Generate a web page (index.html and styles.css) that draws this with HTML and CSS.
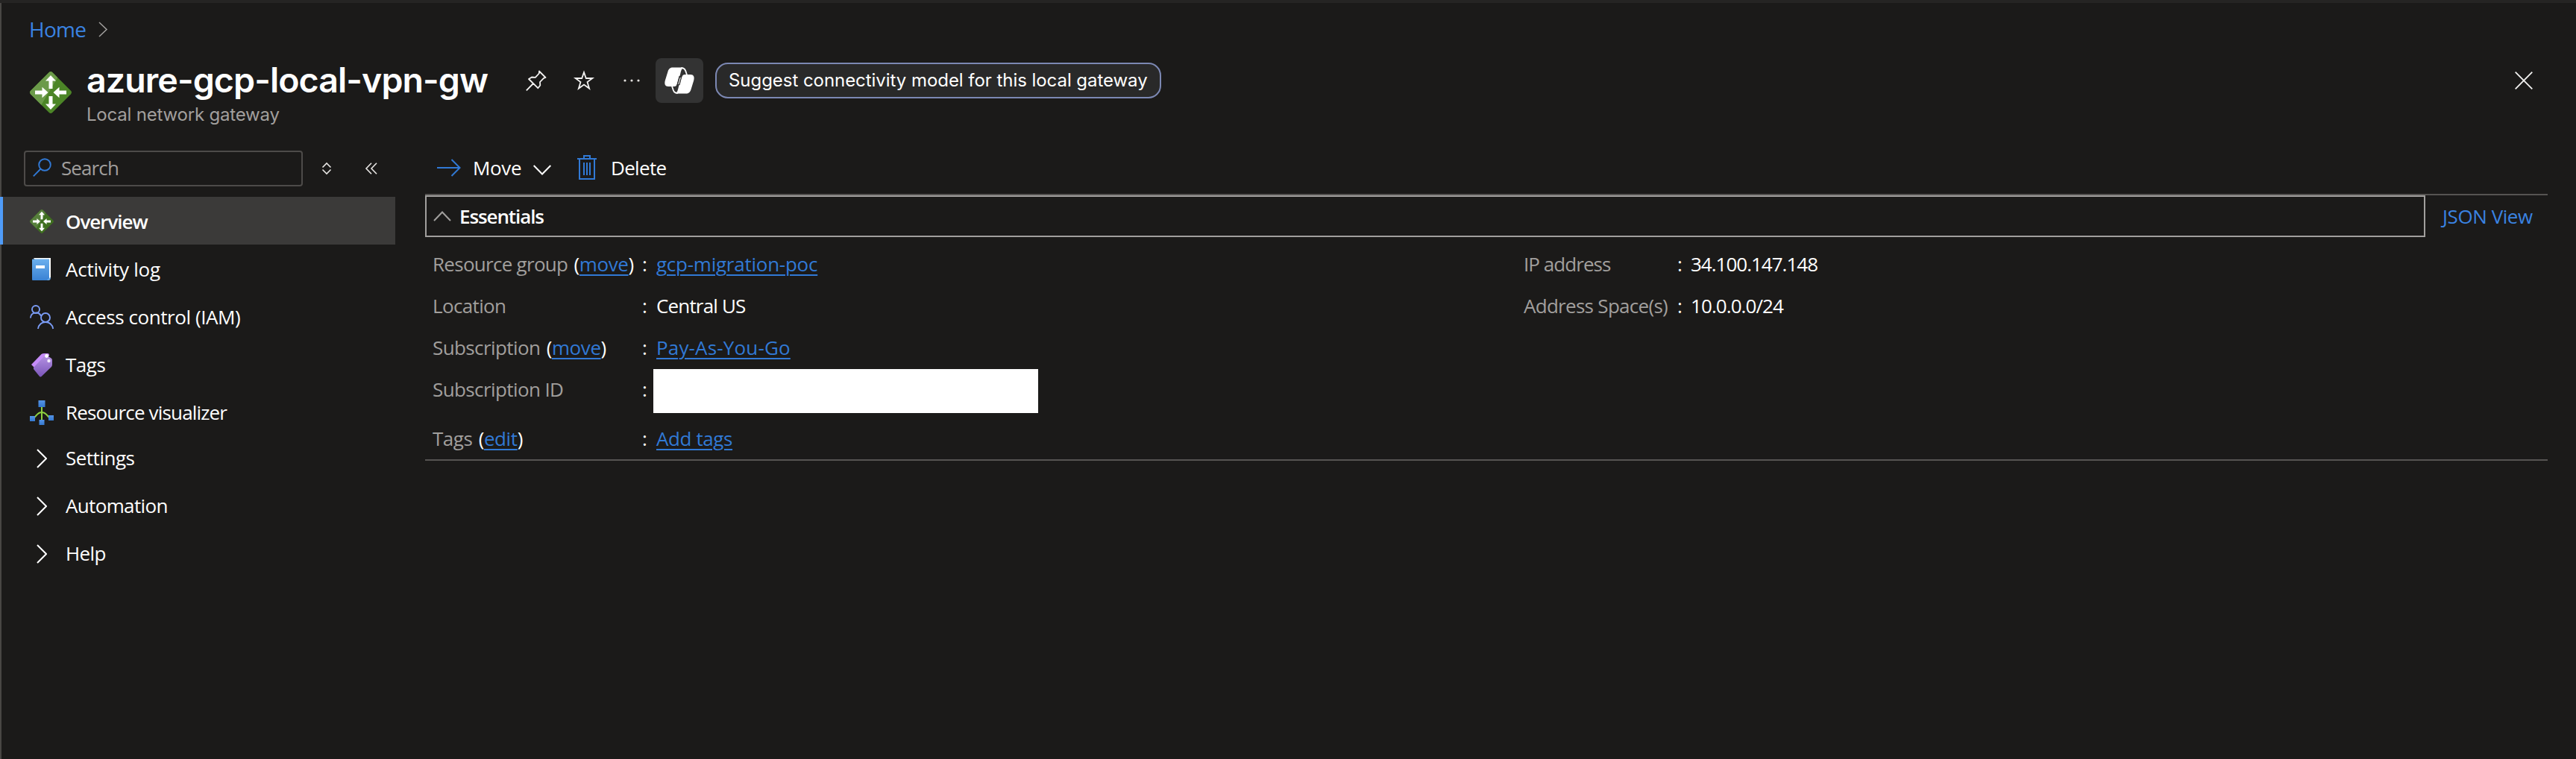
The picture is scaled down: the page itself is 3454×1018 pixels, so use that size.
FILE: index.html
```
<!DOCTYPE html>
<html lang="en">
<head>
<meta charset="utf-8">
<title>azure-gcp-local-vpn-gw</title>
<link rel="stylesheet" href="styles.css">
</head>
<body>
<svg width="0" height="0" class="defs" aria-hidden="true">
  <defs>
    <linearGradient id="book" x1="0" y1="0" x2="0" y2="1"><stop offset="0" stop-color="#6bb0ee"/><stop offset="1" stop-color="#3a82d4"/></linearGradient>
    <linearGradient id="tag" x1="0" y1="0" x2="0" y2="1"><stop offset="0" stop-color="#b794e4"/><stop offset="1" stop-color="#7a55b8"/></linearGradient>
    <linearGradient id="node" x1="0" y1="0" x2="0" y2="1"><stop offset="0" stop-color="#5594e6"/><stop offset="1" stop-color="#3478cf"/></linearGradient>
    <clipPath id="diamond"><path d="M25.8 1 Q28-1 30.2 1 L55 25.8 Q57 28 55 30.2 L30.2 55 Q28 57 25.8 55 L1 30.2 Q-1 28 1 25.8Z"/></clipPath>
    <symbol id="gateway" viewBox="0 0 56 56">
      <g clip-path="url(#diamond)">
        <rect width="56" height="56" fill="var(--gw-dark, #4c8527)"/>
        <path d="M0 0H42L14 47L0 56Z" fill="var(--gw-light, #6b9a49)"/>
      </g>
      <g fill="#fff">
        <path d="M28 5l7 7.500h-4.500V23h-5V12.500H21Z"/>
        <path d="M28 51l7-7.500h-4.500V33h-5v10.500H21Z"/>
        <path d="M24.500 28l-8-7.200v4.700H7v5h9.500v4.700Z"/>
        <path d="M31.500 28l8-7.200v4.700H49v5h-9.500v4.700Z"/>
      </g>
    </symbol>
    <symbol id="chev" viewBox="0 0 14 26"><path d="M1 1l12 12L1 25" fill="none" stroke="currentColor" stroke-width="2"/></symbol>
  </defs>
</svg>
<div class="blade">
  <header class="header">
    <nav class="crumbs"><a class="home">Home</a><svg width="12" height="21" viewBox="0 0 12 21"><path d="M1 1l10 9.500L1 20" fill="none" stroke="#a3a19f" stroke-width="1.500"/></svg></nav>
    <div class="titlebar">
      <svg class="logo" width="56" height="56"><use href="#gateway"/></svg>
      <div class="heading">
        <div class="title-row">
          <h1>azure-gcp-local-vpn-gw</h1>
          <svg class="pin" width="28" height="28" viewBox="0 0 28 28" fill="none" stroke="#f3f2f1" stroke-width="1.800" stroke-linejoin="round"><path d="M18 1.500L26.500 10l-2.500.8-5 5.200.3 4.500-3 3.700L4 12l4-2.500 4.800.3 5-5.300ZM10 18L.8 27.300"/></svg>
          <svg class="star" width="28" height="28" viewBox="0 0 28 28" fill="none" stroke="#f3f2f1" stroke-width="1.800"><path d="M14 3l2.800 8h8.600l-6.900 5.100 2.600 8.500L14 19.500l-7.100 5.100 2.600-8.500L2.600 11h8.600Z"/></svg>
          <svg class="dots" width="22" height="4" viewBox="0 0 22 4" fill="#e1dfdd"><circle cx="2" cy="2" r="1.600"/><circle cx="11" cy="2" r="1.600"/><circle cx="20" cy="2" r="1.600"/></svg>
          <span class="copilot">
            <svg width="40" height="36" viewBox="0 0 40 36">
              <path d="M11 .5H25C22.500 2.500 22 6 21 10L17 22C16 25 15 26 13 26H5C1 26-.5 23 .8 18L4.500 6C5.700 2 8 .5 11 .5Z" fill="#fff"/>
              <path d="M29 35.500H15C17.500 33.500 18 30 19 26L23 14C24 11 25 10 27 10H35C39 10 40.500 13 39.200 18L35.500 30C34.300 34 32 35.500 29 35.500Z" fill="#fff"/>
              <path d="M22 1.300C27.500.8 28 4 30 10.500M18 34.700C12.500 35.200 12 32 10 25.500" fill="none" stroke="#fff" stroke-width="1.800"/>
              <path d="M19.500 12h4L20.500 24h-4Z" fill="#333"/>
              <path d="M21.300 14L18.800 23" fill="none" stroke="#fff" stroke-width="1"/>
            </svg>
          </span>
          <button class="suggest">Suggest connectivity model for this local gateway</button>
          <svg class="close" width="24" height="24" viewBox="0 0 24 24"><path d="M.7.700l22.600 22.600M23.300.700L.7 23.300" stroke="#f3f2f1" stroke-width="1.800"/></svg>
        </div>
        <p class="subtitle">Local network gateway</p>
      </div>
    </div>
  </header>

  <div class="columns">
    <aside class="sidebar">
      <div class="tools">
        <div class="search">
          <svg width="26" height="26" viewBox="0 0 26 26" fill="none" stroke="#3179d5" stroke-width="1.900"><circle cx="16" cy="9" r="7.800"/><path d="M10.500 14.500L.8 24.300"/></svg>
          <span>Search</span>
        </div>
        <svg class="sort" width="12" height="16" viewBox="0 0 12 16" fill="none" stroke="#e8e6e4" stroke-width="1.600"><path d="M.5 6.500L6 1l5.500 5.500M.5 9.500L6 15l5.500-5.500"/></svg>
        <svg class="collapse" width="16" height="16" viewBox="0 0 16 16" fill="none" stroke="#e8e6e4" stroke-width="1.600"><path d="M8 .8L1 8l7 7.200M15 .8L8 8l7 7.200"/></svg>
      </div>
      <ul class="menu">
        <li class="item active"><svg class="gw-small" width="32" height="32"><use href="#gateway"/></svg><span class="m-overview">Overview</span></li>
        <li class="item"><svg width="32" height="32" viewBox="0 0 32 32"><path d="M5 1h23v26l-2 3Z" fill="#fff"/><path d="M3 3.500Q3 2.500 4 2.500H26V28q0 3-2 3H4Q3 31 3 30Z" fill="url(#book)"/><path d="M28 27q0 4-3 4h-2l3-3Z" fill="#69aae8"/><rect x="8" y="11" width="12" height="4" fill="#fff"/></svg><span class="m-activity">Activity log</span></li>
        <li class="item"><svg width="32" height="32" viewBox="0 0 32 32" fill="none" stroke="#7b9cf5" stroke-width="1.900"><circle cx="8" cy="6" r="5"/><path d="M.9 17.500C1.500 9 12.500 8.500 15 15"/><circle cx="21" cy="17" r="6"/><path d="M11 32C12.500 20 29.500 20 31.200 32"/></svg><span class="m-access">Access control (IAM)</span></li>
        <li class="item"><svg width="32" height="32" viewBox="0 0 32 32"><path d="M2 16L15.500 2Q17 1 19 1h5q2 0 2 3L7 21Z" fill="#c58cf8"/><path d="M5 20L21 3l7 4q2 1 2 3v6q0 2-1.500 3.500L15.500 32Q14 33 12.700 31.500L5 22Z" fill="url(#tag)"/><circle cx="22.500" cy="4.500" r="2.400" fill="#fff"/><circle cx="25.500" cy="11" r="2.200" fill="#f2eafc"/></svg><span class="m-tags">Tags</span></li>
        <li class="item"><svg width="32" height="32" viewBox="0 0 32 32"><path d="M16 8v20M5 24c5-4 5-8 11-8s6 4 11 8" fill="none" stroke="#8ed13f" stroke-width="2"/><g fill="url(#node)"><rect x="11.500" y="0" width="9" height="9"/><rect x="0" y="21" width="7" height="7"/><rect x="12.500" y="26" width="7" height="7"/><rect x="25" y="20" width="7" height="7"/></g></svg><span class="m-visualizer">Resource visualizer</span></li>
      </ul>
      <ul class="menu groups">
        <li class="item"><svg class="gchev" width="14" height="26"><use href="#chev"/></svg><span class="m-settings">Settings</span></li>
        <li class="item"><svg class="gchev" width="14" height="26"><use href="#chev"/></svg><span class="m-automation">Automation</span></li>
        <li class="item"><svg class="gchev" width="14" height="26"><use href="#chev"/></svg><span class="m-help">Help</span></li>
      </ul>
    </aside>

    <main class="content">
      <div class="commands">
        <svg class="c-arrow" width="32" height="24" viewBox="0 0 32 24" fill="none" stroke="#3179d5" stroke-width="2"><path d="M0 12H30.500M19.500 1l11 11-11 11"/></svg>
        <span class="c-move">Move</span>
        <svg class="c-down" width="24" height="14" viewBox="0 0 24 14" fill="none" stroke="#fff" stroke-width="2"><path d="M.7 1L12 12.500 23.300 1"/></svg>
        <svg class="c-trash" width="26" height="34" viewBox="0 0 26 34" fill="none" stroke="#3179d5" stroke-width="2"><path d="M0 5H26M9 5V1h8v4M3 5V32H23V5M9 10V27M13 10V27M17 10V27"/></svg>
        <span class="c-delete">Delete</span>
      </div>
      <section class="essentials">
        <div class="ess-head">
          <div class="ess-toggle">
            <svg width="24" height="14" viewBox="0 0 24 14" fill="none" stroke="#a19f9d" stroke-width="2"><path d="M1 13L12 1.500 23 13"/></svg>
            <span>Essentials</span>
          </div>
          <a class="json">JSON View</a>
        </div>
        <div class="props">
          <dl>
            <div class="prop"><dt><span class="l-group">Resource group</span> (<a>move</a>)</dt><i>:</i><dd><a class="v-group">gcp-migration-poc</a></dd></div>
            <div class="prop"><dt><span class="l-location">Location</span></dt><i>:</i><dd class="v-location">Central US</dd></div>
            <div class="prop"><dt><span class="l-sub">Subscription</span> (<a>move</a>)</dt><i>:</i><dd><a class="v-plan">Pay-As-You-Go</a></dd></div>
            <div class="prop tall"><dt><span class="l-sub">Subscription ID</span></dt><i>:</i><dd class="redacted"></dd></div>
            <div class="prop"><dt><span class="l-tags">Tags</span> (<a>edit</a>)</dt><i>:</i><dd><a class="v-tags">Add tags</a></dd></div>
          </dl>
          <dl class="second">
            <div class="prop"><dt><span class="l-ip">IP address</span></dt><i>:</i><dd class="v-ip">34.100.147.148</dd></div>
            <div class="prop"><dt><span class="l-space">Address Space(s)</span></dt><i>:</i><dd class="v-space">10.0.0.0/24</dd></div>
          </dl>
        </div>
      </section>
    </main>
  </div>
</div>
</body>
</html>
```
FILE: styles.css
```
* { box-sizing: border-box; }
body {
  margin: 0;
  background: #1b1a19;
  color: #fff;
  font: 26px/36px "Open Sans", "Noto Sans", sans-serif;
  white-space: nowrap;
}
svg { display: block; flex: none; overflow: visible; }
.defs { position: absolute; }
h1, p, ul, dl, dd { margin: 0; padding: 0; }
a { color: #3179d5; }

.blade {
  height: 1018px;
  border-top: 4px solid #252423;
  box-shadow: inset 2px 0 #484644;
  overflow: hidden;
}

/* header */
.header { height: 198px; padding: 15px 58px 0 40px; }
.crumbs { display: flex; align-items: center; gap: 17px; height: 40px; font-size: 28px; }
.home { margin-left: -1px; color: #3a83e2; letter-spacing: -0.7px; }
.titlebar { display: flex; }
.logo { margin-top: 37px; }
.heading { flex: 1; padding: 19px 0 0 20px; font-family: Inter, sans-serif; }
.title-row { display: flex; align-items: center; height: 60px; }
h1 { width: 589px; margin-top: -2px; font-size: 46.5px; line-height: 60px; font-weight: 600; letter-spacing: -0.9px; }
.star { margin-left: 36px; }
.dots { margin-left: 39px; }
.copilot {
  display: flex; align-items: center; justify-content: center;
  width: 64px; height: 60px; margin-left: 21px;
  border-radius: 8px; background: #333;
}
.suggest {
  width: 598px; height: 48px; margin-left: 16px; padding: 0 0 0 16px;
  border: 2px solid #7c88b3; border-radius: 17px;
  background: #292929; color: #fff; text-align: left;
  font: 24px/44px Inter, sans-serif; letter-spacing: -0.05px;
}
.close { margin-left: auto; }
.subtitle { margin: -1px 0 0 0; color: #a19f9d; font-size: 24px; line-height: 34px; letter-spacing: -0.2px; }

/* layout */
.columns { display: flex; }
.sidebar { flex: none; width: 530px; }
.content { flex: 1; min-width: 0; margin-left: 40px; padding-right: 38px; }

/* sidebar */
.tools { display: flex; align-items: center; height: 48px; padding-left: 32px; }
.search {
  display: flex; align-items: center; gap: 12px;
  width: 374px; height: 48px; padding: 0 10px 2px;
  border: 2px solid #4d4b49; border-radius: 4px;
  color: #a19f9d; letter-spacing: -0.9px;
}
.sort { margin-left: 26px; }
.collapse { margin-left: 46px; }
.menu { margin-top: 14px; list-style: none; }
.groups { margin-top: -2px; }
.item { display: flex; align-items: center; gap: 16px; height: 64px; padding: 2px 0 0 40px; }
.groups .item { padding-top: 0; }
.item.active { background: #3b3a39; box-shadow: inset 4px 0 #4f9bf8; font-weight: 600; }
.gw-small { --gw-dark: #3f6f20; --gw-light: #567f3b; }
.gchev { margin: 2px 9px 0; }
.m-overview { letter-spacing: -1.03px; }
.m-activity { letter-spacing: -0.23px; }
.m-access { letter-spacing: -0.43px; }
.m-tags { letter-spacing: -0.5px; }
.m-visualizer { letter-spacing: -0.83px; }
.m-settings { letter-spacing: -0.5px; }
.m-automation { letter-spacing: -0.65px; }
.m-help { letter-spacing: -0.6px; }

/* command bar */
.commands { display: flex; align-items: center; height: 58px; padding: 0 0 12px 16px; }
.c-move { width: 65px; margin-left: 16px; letter-spacing: -0.33px; }
.c-down { margin: 6px 0 0 16px; }
.c-trash { margin-left: 35px; }
.c-delete { margin-left: 19px; letter-spacing: -0.68px; }

/* essentials */
.essentials { border-top: 2px solid #565452; border-bottom: 2px solid #565452; }
.ess-head { display: flex; align-items: center; }
.ess-toggle {
  display: flex; align-items: center; gap: 11px;
  width: 2682px; height: 56px; padding-left: 9px;
  border: 2px solid #a19f9d;
  font-weight: 600; letter-spacing: -1.1px;
}
.json { margin-left: 23px; color: #3a83e2; letter-spacing: -0.43px; }
.props { display: flex; padding-top: 8px; height: 298px; }
dl { flex: none; width: 1463px; padding-left: 10px; }
.second { flex: 1; }
.prop { display: grid; grid-template-columns: 281px 19px auto; align-items: center; justify-content: start; height: 56px; }
.second .prop { grid-template-columns: 206px 18px auto; }
.prop i { font-style: normal; }
.prop.tall { grid-template-rows: 56px 10px; height: 66px; }
dt { letter-spacing: -0.4px; }
dt span { margin-right: 2px; color: #a19f9d; }
.prop a { text-decoration: underline; text-decoration-thickness: 2px; text-underline-offset: 4px; }
.redacted { align-self: start; width: 516px; height: 59px; margin: 1px 0 0 -4px; background: #fff; }
.l-group { letter-spacing: -0.72px; }
.l-location { letter-spacing: -0.65px; }
.l-sub { letter-spacing: -0.6px; }
.l-tags { letter-spacing: -0.5px; }
.l-ip { letter-spacing: -0.95px; }
.l-space { letter-spacing: -0.71px; }
.v-group { letter-spacing: -0.25px; }
.v-location { letter-spacing: -0.83px; }
.v-plan { letter-spacing: 0.16px; }
.v-tags { letter-spacing: -0.4px; }
.v-ip { letter-spacing: -1px; }
.v-space { letter-spacing: -0.92px; }
```
